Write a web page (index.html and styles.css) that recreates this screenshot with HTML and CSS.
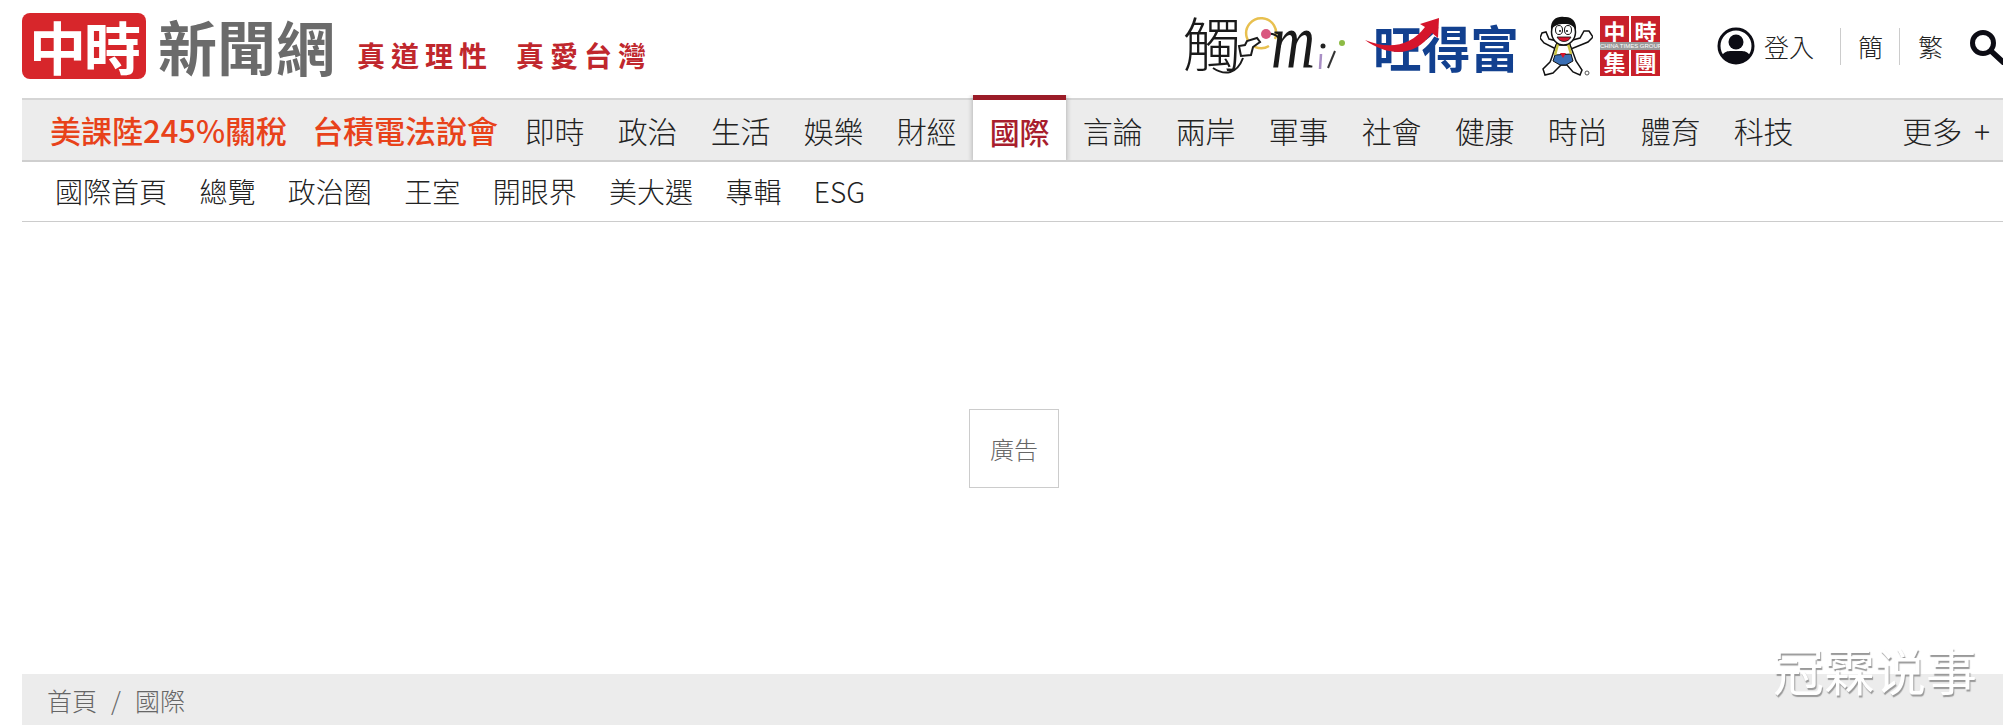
FILE: index.html
```html
<!DOCTYPE html>
<html lang="zh-Hant">
<head>
  <meta charset="UTF-8">
  <meta name="viewport" content="width=device-width, initial-scale=1.0">
  <title>國際 - 中時新聞網</title>
  <link rel="stylesheet" href="styles.css">
</head>
<body>

  <div class="page">
    <!-- Top header -->
    <header class="site-header">
      <a class="brand-box">中時</a>
      <span class="brand-name">新聞網</span>
      <span class="slogan"><span>真道理性</span><span>真愛台灣</span></span>

      <div class="header-right">
        <!-- mi logo -->
        <svg class="logo-mi" viewBox="0 0 162 60">
          <path d="M94 25 A15 15 0 1 0 88 32" class="mi-ring" transform="translate(-2 -2)"/>
          <text x="0" y="50" class="mi-char">觸</text>
          <path d="M30 52 C42 60 54 58 60 42" class="mi-cable"/>
          <path d="M58 40 L56 30 L62 29 L64 25 L74 22 L77 26 L70 31 L68 39 Z" class="mi-hand"/>
          <path d="M83 18 C94 16 100 24 96 32" class="mi-cable"/>
          <circle cx="83" cy="18" r="5" fill="#d9577f"/>
          <text transform="translate(88 52) scale(1 1.3)" class="mi-m">m</text>
          <circle cx="140" cy="30" r="2.5" fill="#222"/>
          <path d="M138 38 L137 53" class="mi-stick"/>
          <path d="M152 35 L145 52" class="mi-slash"/>
          <circle cx="159" cy="27" r="3" fill="#8dbb45"/>
        </svg>

        <!-- wangdefu logo -->
        <svg class="logo-wdf" viewBox="0 0 154 56">
          <text x="8" y="50" class="wdf-text" textLength="146" lengthAdjust="spacingAndGlyphs">旺得富</text>
          <path d="M0 22 C24 32 46 28 60 9 L55 6 L74 0 L73 20 L67 15 C50 40 22 38 0 22 Z" fill="#d5152b"/>
        </svg>

        <!-- mascot -->
        <svg class="logo-mascot" viewBox="0 0 53 62">
          <path d="M17 26 L9 24 L6 17 L2 18 L0 23 L4 28 L16 34 Z" class="m-line"/>
          <path d="M29 26 L40 23 L44 16 L49 16 L53 22 L48 27 L31 34 Z" class="m-line"/>
          <path d="M16 30 C13 38 12 43 10 47 L3 54 L5 60 L13 58 L21 50 L27 50 L33 57 L40 60 L42 55 L36 46 C34 40 32 35 30 30 Z" class="m-line"/>
          <path d="M15 40 L31 39 L33 46 L26 50 L20 50 L13 46 Z" fill="#3a6fb5" stroke="#111" stroke-width="1"/>
          <path d="M18 29 L15 40 M28 29 L31 39" stroke="#c9c23f" stroke-width="2.5" fill="none"/>
          <path d="M20 38 L26 38 L23 43 Z" fill="#d5152b"/>
          <ellipse cx="23.500" cy="17" rx="12" ry="13" class="m-line"/>
          <path d="M11 15 C10 4 18 1 24 2 C32 1 37 7 36 15 C32 9 28 9 24 9 C19 9 14 10 11 15 Z" fill="#111"/>
          <ellipse cx="19" cy="15" rx="3.500" ry="4.500" fill="#fff" stroke="#111"/>
          <ellipse cx="28" cy="15" rx="3.500" ry="4.500" fill="#fff" stroke="#111"/>
          <circle cx="20" cy="16" r="1" fill="#111"/>
          <circle cx="27" cy="16" r="1" fill="#111"/>
          <path d="M17 22 C20 28 28 28 31 22 Z" fill="#d5152b" stroke="#111" stroke-width="0.8"/>
          <circle cx="47" cy="58" r="2" fill="none" stroke="#555"/>
        </svg>

        <!-- group logo -->
        <div class="group-logo">
          <span>中</span><span>時</span><span>集</span><span>團</span>
          <em class="group-band">CHINA TIMES GROUP</em>
        </div>

        <div class="user-link">
          <svg class="user-icon" viewBox="0 0 38 38">
            <circle cx="19" cy="19" r="17" fill="#fff" stroke="#0c0c14" stroke-width="3"/>
            <circle cx="19" cy="15" r="7.500" fill="#0c0c14"/>
            <path d="M5 28 C9 23 13 24 19 24 C25 24 29 23 33 28 C29 34 24 36 19 36 C14 36 9 34 5 28 Z" fill="#0c0c14"/>
          </svg>
          <span>登入</span>
        </div>
        <span class="lang lang-first">簡</span>
        <span class="lang">繁</span>
        <svg class="search-icon" viewBox="0 0 36 36">
          <circle cx="13" cy="14" r="10.500" fill="none" stroke="#0c0c14" stroke-width="5"/>
          <path d="M21 22 L34 34" stroke="#0c0c14" stroke-width="5.500" stroke-linecap="round"/>
        </svg>
      </div>
    </header>

    <!-- Main nav -->
    <nav class="main-nav">
      <a class="nav-hot">美課陸245%關稅</a>
      <a class="nav-hot">台積電法說會</a>
      <a>即時</a>
      <a>政治</a>
      <a>生活</a>
      <a>娛樂</a>
      <a>財經</a>
      <a class="active">國際</a>
      <a>言論</a>
      <a>兩岸</a>
      <a>軍事</a>
      <a>社會</a>
      <a>健康</a>
      <a>時尚</a>
      <a>體育</a>
      <a>科技</a>
      <a class="nav-more">更多 +</a>
    </nav>

    <!-- Sub nav -->
    <nav class="sub-nav">
      <a>國際首頁</a>
      <a>總覽</a>
      <a>政治圈</a>
      <a>王室</a>
      <a>開眼界</a>
      <a>美大選</a>
      <a>專輯</a>
      <a>ESG</a>
    </nav>

    <main class="ad-area">
      <div class="ad-box">廣告</div>
    </main>

    <div class="breadcrumb">
      <a>首頁</a>
      <span class="crumb-sep">/</span>
      <a>國際</a>
    </div>
  </div>

  <div class="watermark">冠霖说事</div>

</body>
</html>
```

FILE: styles.css
```css
html, body {
  margin: 0;
  padding: 0;
  height: 725px;
  overflow: hidden;
  background: white;
}
body {
  font-family: "Noto Sans CJK TC", "Liberation Sans", sans-serif;
  font-weight: 300;
  color: #222;
}
.page {
  width: 1984px;
  margin-left: 22px;
  height: 725px;
  display: flex;
  flex-direction: column;
}

/* header */
.site-header {
  display: flex;
  align-items: center;
  height: 98px;
  padding-bottom: 6px;
  box-sizing: border-box;
  flex-shrink: 0;
}
.brand-box {
  width: 124px;
  height: 66px;
  background-color: #d7262b;
  border-radius: 8px;
  color: white;
  font-size: 57px;
  font-weight: 700;
  line-height: 64px;
  text-align: center;
  letter-spacing: -2px;
}
.brand-name {
  margin-left: 12px;
  font-size: 59px;
  line-height: 66px;
  font-weight: 700;
  color: #6b6b6b;
}
.slogan {
  display: flex;
  gap: 23px;
  margin-left: 22px;
  margin-top: 18px;
  font-size: 28px;
  line-height: 40px;
  font-weight: 700;
  letter-spacing: 6px;
  color: #c0272d;
}
.header-right {
  margin-left: auto;
  display: flex;
  align-items: center;
}
.logo-mi, .logo-wdf {
  overflow: visible;
}
.logo-mi {
  width: 162px;
  height: 60px;
}
.mi-char {
  font-size: 58px;
  font-weight: 300;
  fill: #1a1a1a;
}
.mi-m {
  font-family: "Liberation Serif", serif;
  font-style: italic;
  font-size: 61px;
  fill: #1a1a1a;
}
.mi-ring {
  fill: none;
  stroke: #e8c04f;
  stroke-width: 2.5;
}
.mi-cable {
  fill: none;
  stroke: #1a1a1a;
  stroke-width: 2;
}
.mi-hand {
  fill: white;
  stroke: #1a1a1a;
  stroke-width: 2;
}
.mi-stick {
  stroke: #a98fc5;
  stroke-width: 2.5;
}
.mi-slash {
  stroke: #333;
  stroke-width: 2;
}
.logo-wdf {
  width: 154px;
  height: 56px;
  margin-left: 20px;
}
.wdf-text {
  font-size: 50px;
  font-weight: 700;
  fill: #12408f;
}
.logo-mascot {
  width: 53px;
  height: 62px;
  margin-left: 21px;
}
.m-line {
  fill: white;
  stroke: #111;
  stroke-width: 1.5;
}
.group-logo {
  position: relative;
  width: 60px;
  height: 60px;
  margin-left: 7px;
  display: grid;
  grid-template-columns: 1fr 1fr;
  grid-template-rows: 1fr 1fr;
  gap: 2px;
}
.group-logo span {
  background-color: #c8202a;
  color: white;
  font-size: 22px;
  font-weight: 700;
  line-height: 29px;
  text-align: center;
}
.group-band {
  position: absolute;
  left: 0;
  right: 0;
  top: 26px;
  height: 8px;
  background-color: #9a9a9a;
  color: white;
  font-size: 6px;
  font-style: normal;
  font-family: "Liberation Sans", sans-serif;
  line-height: 8px;
  text-align: center;
  white-space: nowrap;
  overflow: hidden;
}
.user-link {
  display: flex;
  align-items: center;
  gap: 9px;
  margin-left: 57px;
  font-size: 25px;
  padding-right: 26px;
  color: #222;
}
.user-icon {
  width: 38px;
  height: 38px;
}
.lang {
  padding-left: 17px;
  border-left: 1px solid #ccc;
  font-size: 25px;
  line-height: 37px;
  padding-right: 16px;
  color: #222;
}
.lang + .lang {
  padding-left: 18px;
  padding-right: 27px;
}
.search-icon {
  width: 36px;
  height: 36px;
  margin-top: 1px;
}

/* main nav */
.main-nav {
  display: flex;
  align-items: stretch;
  height: 64px;
  flex-shrink: 0;
  box-sizing: border-box;
  padding-left: 14px;
  padding-right: 16px;
  background-color: #ececec;
  border-top: 2px solid #d5d5d5;
  border-bottom: 2px solid #cfcfcf;
  font-size: 30px;
  line-height: 60px;
  color: #222;
}
.main-nav a {
  padding: 0 16.5px;
  white-space: nowrap;
}
.main-nav .nav-hot {
  color: #e8421a;
  font-size: 31px;
  font-weight: 500;
  padding: 0 12px 0 14px;
}
.main-nav .nav-hot + .nav-hot {
  padding: 0 10px 0 13px;
}
.main-nav .active {
  position: relative;
  background-color: white;
  color: #a81e2d;
  font-weight: 500;
  margin-top: -5px;
  margin-bottom: -2px;
  border-top: 5px solid #9b1c28;
  line-height: 62px;
  box-shadow: 2px 0 4px rgba(0, 0, 0, 0.15), -2px 0 4px rgba(0, 0, 0, 0.15);
  clip-path: inset(0 -6px 2px -6px);
}
.main-nav .nav-more {
  margin-left: auto;
  padding: 0;
  word-spacing: 5px;
}

/* sub nav */
.sub-nav {
  display: flex;
  gap: 32.4px;
  height: 60px;
  flex-shrink: 0;
  box-sizing: border-box;
  padding-left: 33px;
  border-bottom: 1px solid #ccc;
  font-size: 28px;
  line-height: 58px;
  color: #222;
}

/* ad */
.ad-area {
  flex: 1;
  display: flex;
  align-items: center;
  justify-content: center;
}
.ad-box {
  width: 90px;
  height: 79px;
  box-sizing: border-box;
  border: 1px solid #ccc;
  color: #666;
  font-size: 24px;
  line-height: 77px;
  text-align: center;
}

/* breadcrumb */
.breadcrumb {
  display: flex;
  align-items: center;
  gap: 14px;
  height: 51px;
  flex-shrink: 0;
  padding-left: 25px;
  background-color: #ececec;
  font-size: 25px;
  color: #666;
}

.watermark {
  position: absolute;
  left: 1773px;
  top: 634px;
  font-size: 51px;
  line-height: 70px;
  font-weight: 400;
  color: white;
  text-shadow: 1px 2px 1px #999;
  white-space: nowrap;
}
```
